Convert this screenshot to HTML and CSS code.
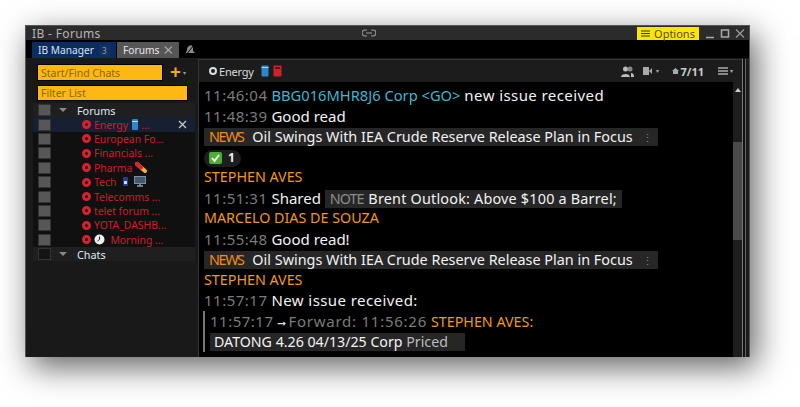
FILE: index.html
```html
<!DOCTYPE html>
<html lang="en">
<head>
<meta charset="utf-8">
<title>IB - Forums</title>
<link rel="stylesheet" href="styles.css">
</head>
<body>
<div class="window">
  <div class="titlebar">
    <span class="title">IB - Forums</span>
    <svg class="link-icon" width="14" height="8" viewBox="0 0 14 8"><path d="M5 1H3a3 3 0 0 0 0 6h2M9 1h2a3 3 0 0 1 0 6H9M4 4h6" fill="none" stroke="#9a9a9a" stroke-width="1.2"/></svg>
    <div class="title-right">
      <span class="options"><svg width="9" height="7" viewBox="0 0 9 7"><path d="M0 1h9M0 3.500h9M0 6h9" stroke="#333" stroke-width="1.2"/></svg>Options</span>
      <span class="winbtn"><svg width="12" height="11" viewBox="0 0 12 11"><path d="M2 9.500h8" stroke="#aaa" stroke-width="1.500"/></svg></span>
      <span class="winbtn"><svg width="12" height="11" viewBox="0 0 12 11"><rect x="2.500" y="2" width="7" height="7" fill="none" stroke="#aaa" stroke-width="1.500"/></svg></span>
      <span class="winbtn"><svg width="12" height="11" viewBox="0 0 12 11"><path d="M2 1.500l8 8M10 1.500l-8 8" stroke="#999" stroke-width="1.200"/></svg></span>
    </div>
  </div>
  <div class="tabs">
    <span class="tab tab-blue">IB Manager <small>3</small></span>
    <span class="tab tab-grey">Forums <svg width="10" height="10" viewBox="0 0 10 10"><path d="M1 1l8 8M9 1l-8 8" stroke="#b5b5b5" stroke-width="1.300"/></svg></span>
    <svg class="bell" width="13" height="13" viewBox="0 0 13 13"><path d="M6 2c2-1.500 4-.5 4 2v3l2 2H3l-1 2 2-5c0-2 .5-3 2-4z" fill="#8c8c8c"/><path d="M11 1L2 12" stroke="#000" stroke-width="1"/></svg>
  </div>
  <div class="content">
    <aside class="sidebar">
      <div class="find-row">
        <span class="input input-find">Start/Find Chats</span>
        <span class="plus">+</span><span class="caret-dot">▾</span>
      </div>
      <div class="input input-filter">Filter List</div>
      <div class="tree">
        <div class="row head"><span class="box"></span><span class="tri"></span><span class="head-label">Forums</span></div>
        <div class="row selected"><span class="box"></span><span class="dot"></span><span class="name">Energy <svg class="ico" width="8" height="11" viewBox="0 0 8 11"><rect x="1" y="0" width="6" height="11" rx="1" fill="#2d86c9"/><rect x="1" y="2" width="6" height="1" fill="#bfe3f7"/></svg> ...</span><svg class="row-x" width="9" height="9" viewBox="0 0 9 9"><path d="M1 1l7 7M8 1l-7 7" stroke="#c8c8c8" stroke-width="1.300"/></svg></div>
        <div class="row"><span class="box"></span><span class="dot"></span><span class="name">European Fo...</span></div>
        <div class="row"><span class="box"></span><span class="dot"></span><span class="name">Financials ...</span></div>
        <div class="row"><span class="box"></span><span class="dot"></span><span class="name">Pharma <svg class="ico" width="12" height="11" viewBox="0 0 12 11"><path d="M2 2l8 7" stroke="#e8b13a" stroke-width="4" stroke-linecap="round"/><path d="M2 2l4 3.500" stroke="#d8262c" stroke-width="4" stroke-linecap="round"/></svg></span></div>
        <div class="row"><span class="box"></span><span class="dot"></span><span class="name">Tech &nbsp;<svg class="ico" width="7" height="11" viewBox="0 0 7 11"><rect x="1" y="1" width="5" height="9" rx="1" fill="#24408c"/><rect x="2" y="5" width="3" height="3" fill="#cfd8ef"/></svg> &nbsp;<svg class="ico" width="12" height="11" viewBox="0 0 12 11"><rect x="0" y="0" width="12" height="8" fill="#7f8e99"/><rect x="1" y="1" width="10" height="6" fill="#3f5a6e"/><path d="M3 10h6M6 8v2" stroke="#8d9aa3" stroke-width="1.500"/></svg></span></div>
        <div class="row"><span class="box"></span><span class="dot"></span><span class="name">Telecomms ...</span></div>
        <div class="row"><span class="box"></span><span class="dot"></span><span class="name">telet forum ...</span></div>
        <div class="row"><span class="box"></span><span class="dot"></span><span class="name">YOTA_DASHB...</span></div>
        <div class="row"><span class="box"></span><span class="dot"></span><span class="name"><svg class="ico" width="11" height="11" viewBox="0 0 11 11"><circle cx="5.500" cy="5.500" r="5" fill="#eee"/><path d="M5.500 2.500v3l-2 1.500" fill="none" stroke="#222" stroke-width="1"/></svg> &nbsp;Morning ...</span></div>
        <div class="row head"><span class="box box-dark"></span><span class="tri"></span><span class="head-label">Chats</span></div>
      </div>
    </aside>
    <main class="panel">
      <div class="panel-head">
        <span class="ring"></span><span class="panel-title">Energy</span>
        <svg class="can" width="8" height="12" viewBox="0 0 8 12"><rect x="0.500" y="0.500" width="7" height="11" rx="1" fill="#2d86c9"/><rect x="0.500" y="2" width="7" height="1" fill="#a8d6ef"/></svg>
        <svg class="can" width="10" height="12" viewBox="0 0 10 12"><rect x="0.500" y="0.500" width="8" height="11" rx="1" fill="#d4202a"/><rect x="2" y="2" width="5" height="2" fill="#5c1015"/></svg>
        <div class="panel-tools">
          <svg width="13" height="11" viewBox="0 0 13 11"><circle cx="4.500" cy="3" r="2.500" fill="#bbb"/><circle cx="9" cy="3" r="2.500" fill="#888"/><path d="M0 11c0-4 9-4 9 0zM10 7c2 0 3 1 3 4h-3z" fill="#bbb"/></svg>
          <span class="tool-gap"><svg width="9" height="8" viewBox="0 0 9 8"><rect width="6" height="8" fill="#a8a8a8"/><path d="M6 4l3-3v6z" fill="#a8a8a8"/></svg><span class="mini">▾</span></span>
          <span class="count"><svg width="7" height="6" viewBox="0 0 7 6"><path d="M0 3l3.500-3L7 3H6v3H1V3z" fill="#aaa"/></svg>7/11</span>
          <span class="tool-gap tool-menu"><svg width="10" height="8" viewBox="0 0 10 8"><path d="M0 1h10M0 4h10M0 7h10" stroke="#aaa" stroke-width="1.300"/></svg><span class="mini">▾</span></span>
        </div>
      </div>
      <div class="body-wrap">
        <div class="messages">
          <div class="line"><span class="time">11:46:04</span> <span class="teal">BBG016MHR8J6 Corp &lt;GO&gt;</span> <span class="wide">new issue received</span></div>
          <div class="line"><span class="time">11:48:39</span> Good read</div>
          <div class="line"><span class="chip"><span class="news">NEWS</span> Oil Swings With IEA Crude Reserve Release Plan in Focus <span class="kebab">⋮</span></span></div>
          <div class="line"><span class="reaction"><svg width="13" height="12" viewBox="0 0 13 12"><rect width="13" height="12" rx="2" fill="#4cae33"/><path d="M3 6l2.500 3L10 3" fill="none" stroke="#fff" stroke-width="1.800"/></svg> 1</span></div>
          <div class="line author">STEPHEN AVES</div>
          <div class="line"><span class="time">11:51:31</span> Shared <span class="chip"><span class="note">NOTE</span> <span class="brent">Brent Outlook: Above $100 a Barrel;</span></span></div>
          <div class="line author">MARCELO DIAS DE SOUZA</div>
          <div class="line"><span class="time">11:55:48</span> Good read!</div>
          <div class="line"><span class="chip"><span class="news">NEWS</span> Oil Swings With IEA Crude Reserve Release Plan in Focus <span class="kebab">⋮</span></span></div>
          <div class="line author">STEPHEN AVES</div>
          <div class="line"><span class="time">11:57:17</span> <span class="wide">New issue received:</span></div>
          <div class="quote">
            <div class="line"><span class="time">11:57:17</span> <span class="arrow">➞</span><span class="time forward">Forward: 11:56:26</span> <span class="author">STEPHEN AVES:</span></div>
            <div class="line"><span class="chip chip-bond">DATONG 4.26 04/13/25 Corp <span class="priced">Priced</span></span></div>
          </div>
        </div>
        <div class="scroll"><span class="up"></span><span class="thumb"></span></div>
      </div>
    </main>
    <div class="edge"></div>
  </div>
</div>
</body>
</html>
```

FILE: styles.css
```css
* { box-sizing: border-box; }
html, body { margin: 0; height: 100%; }
body {
  background: #fff;
  padding: 25px 50px 0 25px;
  overflow: hidden;
  font-family: "Noto Sans", sans-serif;
}
.window {
  width: 725px;
  height: 332px;
  background: #1c1c1c;
  border: 1px solid #555;
  border-bottom: 0;
  box-shadow: 6px 10px 30px rgba(0,0,0,.62);
  display: flex;
  flex-direction: column;
  overflow: hidden;
}
.titlebar {
  height: 14px;
  background: #2b2b2b;
  display: flex;
  align-items: center;
  position: relative;
  padding-left: 6px;
  flex: none;
}
.title { color: #b5b5b5; font-size: 12px; letter-spacing: .35px; }
.link-icon { position: absolute; left: 336px; top: 3px; }
.title-right { margin-left: auto; display: flex; align-items: center; height: 100%; padding-right: 2px; }
.options {
  background: #ffe600;
  color: #5a4a00;
  font-size: 11px;
  height: 13px;
  width: 62px;
  display: flex;
  align-items: center;
  justify-content: center;
  gap: 4px;
  margin-right: 3px;
}
.winbtn { width: 15px; display: flex; justify-content: center; }
.tabs {
  height: 18px;
  padding-top: 2px;
  background: #000;
  display: flex;
  align-items: stretch;
  padding-left: 6px;
  gap: 1px;
  flex: none;
}
.tab { font-size: 10.200px; display: flex; align-items: center; padding: 0 6px; gap: 5px; white-space: nowrap; }
.tab small { font-size: 8px; color: #999; background: #12315f; padding: 0 3px; }
.tab-blue { background: #0b2c63; color: #d8e2f0; width: 84px; }
.tab-grey { background: #565656; color: #e8e8e8; width: 62px; }
.bell { align-self: center; margin-left: 3px; }
.content { flex: 1; display: flex; background: #1b1b1b; min-height: 0; padding-top: 1px; }
.sidebar { width: 172px; flex: none; padding: 5px 0 0 11px; display: flex; flex-direction: column; background: #191919; }
.find-row { display: flex; align-items: center; height: 17px; }
.input {
  background: #fdb813;
  color: #8c6508;
  font-size: 10.500px;
  border: 1px solid #000;
  display: flex;
  align-items: center;
  padding-left: 3px;
}
.input-find { width: 126px; height: 17px; }
.plus { color: #f5a81c; font-size: 19px; font-weight: 700; margin-left: 7px; line-height: 17px; }
.caret-dot { color: #999; font-size: 6px; margin-left: 2px; }
.input-filter { width: 151px; height: 16px; margin-top: 4px; }
.tree { margin-top: 2px; width: 162px; background: #101010; margin-left: -4px; }
.row { height: 14.400px; display: flex; align-items: center; position: relative; font-size: 10.400px; }
.row.head { background: #1f1f1f; font-size: 10.800px; }
.row.selected { background: #172033; }
.box { width: 13px; height: 12px; background: #575757; border: 1px solid #333; margin-left: 5px; flex: none; }
.box-dark { background: #141414; }
.tri { width: 0; height: 0; border: 4px solid transparent; border-top: 4px solid #888; border-bottom: 0; margin-left: 8px; }
.head-label { color: #dfe8f5; margin-left: 10px; }
.dot { width: 9px; height: 9px; border: 3px solid #d8202e; border-radius: 50%; margin-left: 31px; flex: none; }
.name { color: #d01c2c; margin-left: 3px; white-space: nowrap; }
.ico { vertical-align: -1px; }
.row-x { position: absolute; right: 8px; top: 3px; }
.panel { flex: 1; min-width: 0; background: #000; border-left: 1px solid #333; display: flex; flex-direction: column; }
.panel-head {
  height: 23px;
  background: #1c1c1c;
  border-top: 1px solid #333;
  display: flex;
  align-items: center;
  padding-left: 10px;
  gap: 2px;
  flex: none;
}
.ring { width: 8px; height: 8px; border: 2.500px solid #ddd; border-radius: 50%; }
.panel-title { color: #ddd; font-size: 11px; margin-right: 3px; letter-spacing: -.2px; }
.can { margin-left: 2px; }
.panel-tools { margin-left: auto; display: flex; align-items: center; gap: 9px; padding-right: 9px; }
.tool-gap { display: flex; align-items: center; gap: 4px; }
.tool-gap + .count { margin-left: 4px; }
.tool-menu { margin-left: 5px; gap: 2px; }
.mini { color: #aaa; font-size: 6px; }
.count { color: #ccc; font-size: 11px; font-weight: 700; display: flex; align-items: center; gap: 2px; }
.body-wrap { flex: 1; display: flex; min-height: 0; }
.messages { flex: 1; min-width: 0; padding: 3px 0 0 5px; color: #f2f2f2; font-size: 15px; overflow: hidden; }
.line { height: 20.500px; line-height: 20.500px; white-space: nowrap; }
.time { color: #7b7b7b; letter-spacing: .5px; }
.forward { letter-spacing: .75px; margin-left: 2px; }
.teal { color: #3fb6cf; font-size: 14.700px; }
.wide { letter-spacing: .42px; }
.author { color: #f39a0d; font-size: 14.300px; }
.chip { background: #262626; display: inline-block; height: 18px; line-height: 18px; padding: 0 5px; font-size: 14.400px; }
.news { color: #f18a1c; margin-right: 5px; letter-spacing: -1.400px; }
.note { color: #8c8c8c; margin-right: 1px; letter-spacing: -1px; }
.brent { letter-spacing: .2px; }
.kebab { color: #888; margin-left: 6px; font-size: 11px; }
.reaction { background: #1e1e1e; border-radius: 9px; display: inline-flex; align-items: center; gap: 6px; height: 17px; padding: 0 6px 0 5px; font-size: 12px; font-weight: 700; vertical-align: middle; }
.quote { border-left: 2px solid #777; margin-left: -1px; padding-left: 5px; }
.arrow { color: #ddd; font-size: 11px; }
.chip-bond { font-size: 14.200px; padding: 0 17px 0 4px; }
.priced { color: #bbb; }
.scroll { width: 9px; flex: none; background: #1d1d1d; position: relative; }
.up { position: absolute; left: 2px; top: 6px; border: 3px solid transparent; border-bottom: 4px solid #ccc; border-top: 0; }
.thumb { position: absolute; left: 0; top: 60px; width: 9px; height: 98px; background: #4a4a4a; }
.edge { width: 7px; flex: none; background: linear-gradient(to right, #777 0 1px, #111 1px 3px, #666 3px 4px, #1c1c1c 4px); }
```
